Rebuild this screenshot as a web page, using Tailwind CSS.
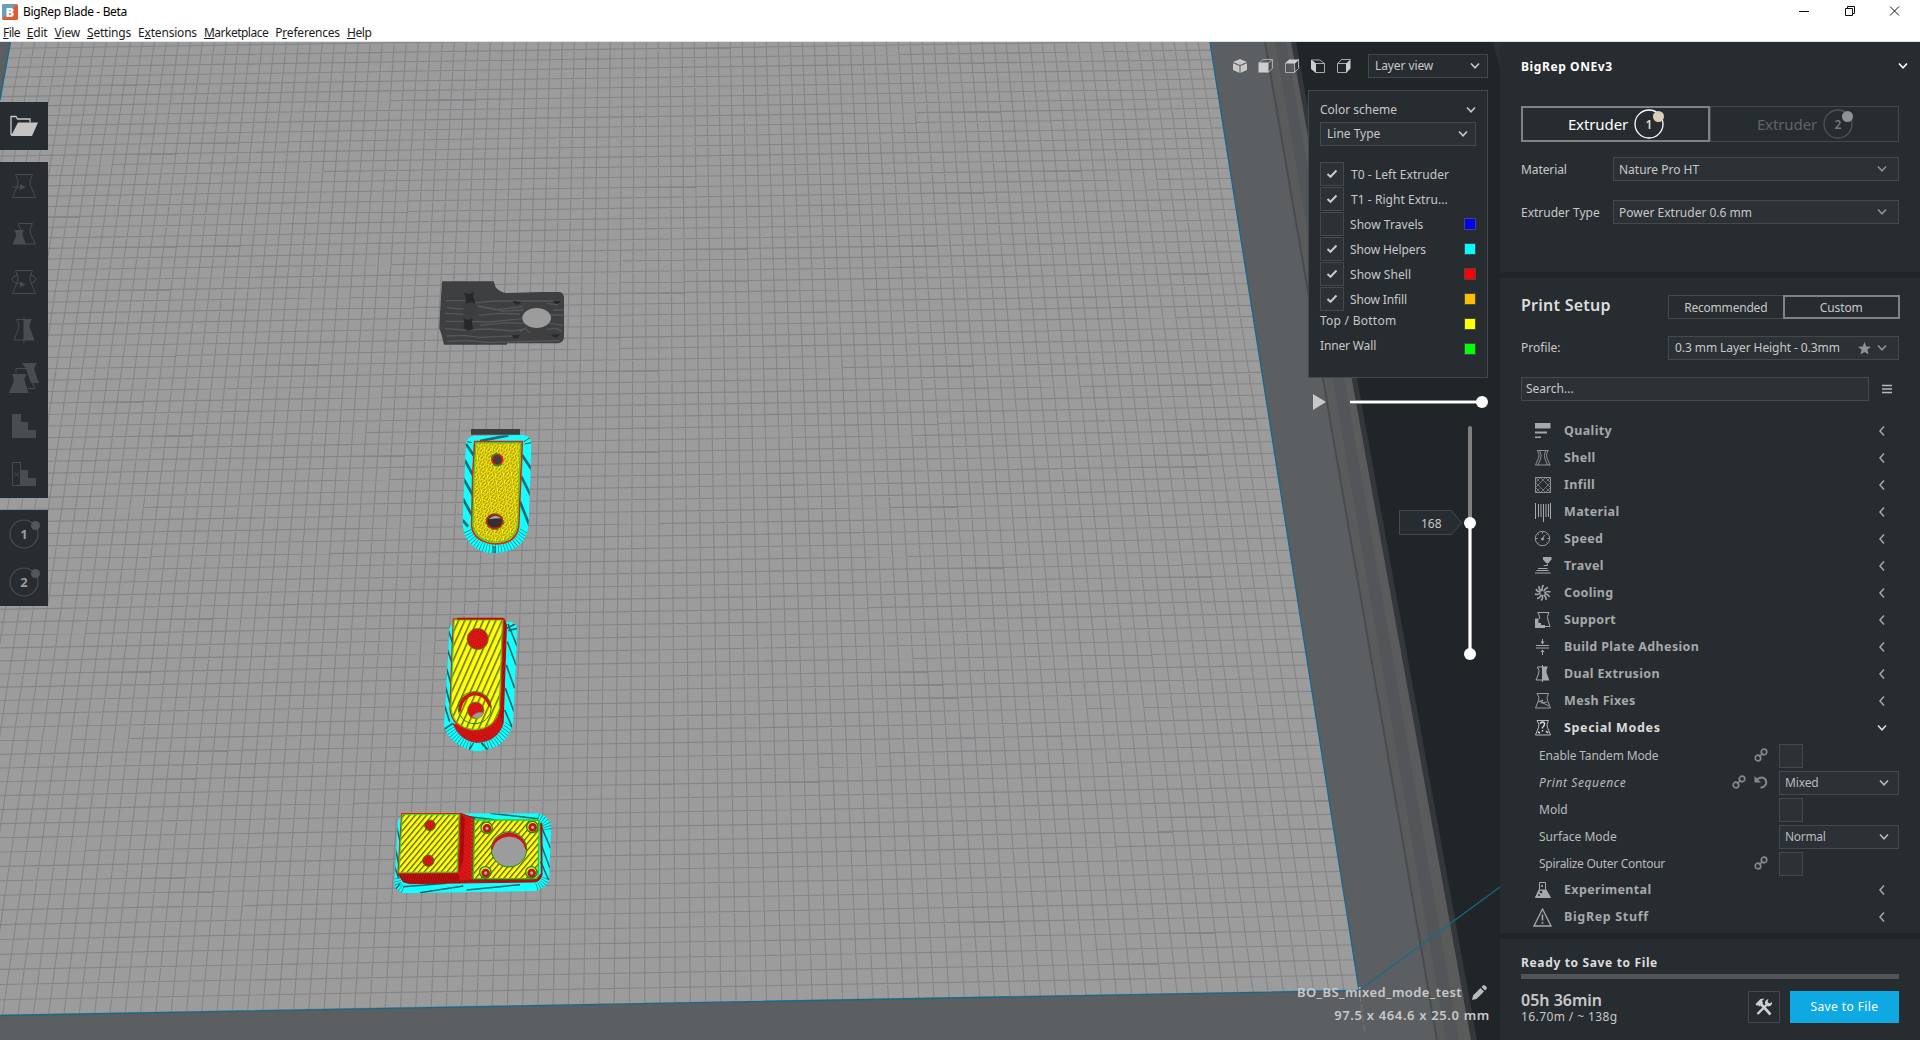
<!DOCTYPE html>
<html lang="en">
<head>
<meta charset="utf-8">
<title>BigRep Blade - Beta</title>
<script src="https://cdn.jsdelivr.net/npm/@tailwindcss/browser@4"></script>
</head>
<body class="flex h-[1040px] w-[1920px] flex-col overflow-hidden bg-white font-['Noto_Sans',sans-serif] text-[12px] leading-none text-[#c8c8c8]">
<svg class="hidden">
  <symbol id="down" viewBox="0 0 10 8"><path d="M1 1.500 5 5.800 9 1.500" fill="none" stroke="currentColor" stroke-width="1.600"/></symbol>
  <symbol id="left" viewBox="0 0 8 12"><path d="M6 1.500 2 6l4 4.500" fill="none" stroke="currentColor" stroke-width="1.500"/></symbol>
  <symbol id="check" viewBox="0 0 12 10"><path d="M1.500 5 4.500 7.800 10.500 1.500" fill="none" stroke="currentColor" stroke-width="2"/></symbol>
  <symbol id="link" viewBox="0 0 14 14"><g fill="none" stroke="currentColor" stroke-width="1.700"><circle cx="4" cy="10" r="2.800"/><circle cx="10" cy="4" r="2.800"/><path d="M5 9 9 5"/></g></symbol>
</svg>

<header class="flex h-[42px] flex-none flex-col border-b border-[#dde2e4] text-black">
  <div class="flex h-[24px] items-center">
    <svg class="ml-[2px] h-[16px] w-[16px]" viewBox="0 0 16 16"><rect width="16" height="16" rx="1.500" fill="#e05a35"/><path d="M0 1.500Q0 0 1.500 0H14.500L0 15Z" fill="#67a3b4"/><text x="8" y="12.800" text-anchor="middle" font-family="Noto Sans" font-weight="900" font-size="13" fill="#fff">B</text></svg>
    <span class="ml-[5px] text-[12px] tracking-[-0.35px]">BigRep Blade - Beta</span>
    <div class="ml-auto flex items-center">
      <svg class="h-[12px] w-[110px]" viewBox="0 0 110 12" fill="none" stroke="#111" stroke-width="1"><path d="M6 5.500h10M52.500 2.500h7v7h-7zM54.500 2.500v-2h7v7h-2M97 .5l9 9M106 .5l-9 9"/></svg>
      <span class="w-[17px]"></span>
    </div>
  </div>
  <nav class="flex h-[17px] items-center gap-[7px] pl-[3px] text-[12px] tracking-[-0.2px] text-[#1c1c1c]">
    <span class="tracking-[-0.6px]"><u>F</u>ile</span><span><u>E</u>dit</span><span><u>V</u>iew</span><span><u>S</u>ettings</span><span>E<u>x</u>tensions</span><span class="tracking-[-0.5px]"><u>M</u>arketplace</span><span>P<u>r</u>eferences</span><span class="tracking-[-0.4px]"><u>H</u>elp</span>
  </nav>
</header>

<div class="flex flex-1">
<main class="relative h-[998px] w-[1500px] flex-none overflow-hidden bg-[#202528]">
  <svg class="absolute inset-0 h-[998px] w-[1500px]" viewBox="0 42 1500 998">
    <defs>
      <clipPath id="plate"><path d="M10.500 42H1210L1359 990.500 0 1015.500V100Z"/></clipPath>
      <clipPath id="brimA"><path d="M280 528 430 525Q453 530 453 545V600L446 790Q443 835 415 858 385 878 345 880 300 880 272 852 246 825 248 780L258 545Q264 532 280 528Z"/></clipPath>
      <clipPath id="brimB"><path d="M208 85 220 66H395L411 78V110L399 370Q390 410 355 436 320 454 285 453 240 446 205 408L192 380Z"/></clipPath>
      <clipPath id="brimC"><path d="M54 660 66 648 240 640H478Q508 652 513 678L508 838Q502 862 466 873L70 880Q48 874 43 855Z"/></clipPath>
      <pattern id="hatch" width="17" height="17" patternUnits="userSpaceOnUse" patternTransform="rotate(24)"><rect width="17" height="17" fill="#ffff12"/><rect width="4.500" height="17" fill="#6c6a00"/></pattern>
      <pattern id="hatch2" width="13" height="13" patternUnits="userSpaceOnUse" patternTransform="rotate(40)"><rect width="13" height="13" fill="#ffff12"/><rect width="4" height="13" fill="#5f5d00"/></pattern>
      <pattern id="speck" width="24" height="21" patternUnits="userSpaceOnUse" patternTransform="rotate(-7)"><rect width="24" height="21" fill="#fff714"/><path d="M1 5h3V2h3M9 9h3V6h3M17 4h3V1h3M3 15h3v-3h3M12 19h3v-3h3M19 12h3v-3M8 2h3M2 20h3M21 18h3" fill="none" stroke="#5b4a00" stroke-width="2.200"/><path d="M5 9h4M14 13h5M18 7h4M9 17h3" stroke="#c48a00" stroke-width="3"/></pattern>
      <pattern id="redsp" width="9" height="9" patternUnits="userSpaceOnUse" patternTransform="rotate(35)"><rect width="9" height="9" fill="#f01818"/><path d="M0 2h5M4 7h5" stroke="#9a0c0c" stroke-width="2.500"/></pattern>
      <pattern id="redd" width="7" height="7" patternUnits="userSpaceOnUse" patternTransform="rotate(15)"><rect width="7" height="7" fill="#c80f0f"/><rect width="3" height="7" fill="#8f0b0b"/></pattern>
    </defs>
    <path d="M0 42H1292L1473 1040H0Z" fill="#5b5f61"/>
    <path d="M1265 42h27l181 998h-36Z" fill="#5a5c5c"/>
    <path d="M1275 42h11l173 998h-13Z" fill="#525658"/>
    <path d="M1265 42 1437 1040" stroke="#484c4e" stroke-width="2"/>
    <path d="M1291 42h5l181 998h-6Z" fill="#33373a"/>
    <path d="M1493 42h7v26Z" fill="#2b3033"/>
    <g clip-path="url(#plate)">
      <rect y="42" width="1400" height="998" fill="#9c9c9c"/>
      <g id="grid" stroke="#848589" stroke-width="1.100"></g>
    </g>
    <path d="M10.500 42 0 100M1210 42 1359 990.500 0 1015.500M1359 990.500 1500 887" fill="none" stroke="#17698c" stroke-width="1.300"/>
    <path d="M1360 995 1365 1035" stroke="#74787a" stroke-dasharray="7 3"/>

    <g transform="translate(380 260) scale(.33333)">
      <path d="M186 64H341L347 82Q358 96 378 99L484 96H538Q550 98 552 110V232Q550 247 535 250H382L380 254H192L184 222 178 205 179 180 183 110Z" fill="#3d3f41"/>
      <path d="M198 122H250L290 128 350 123H545M200 143 240 147 300 140 345 149 430 140M290 136 370 153 430 150M196 160 250 163M298 166 350 160 420 162M198 184H246L330 186 425 176M510 165H550M300 196 380 188 432 190M196 206 250 210 330 207 400 213 430 208M510 190 550 196M200 228 250 226 300 232 400 228M420 215 435 205 450 218M500 208 530 205 545 215M200 244 260 242 330 247 540 242M500 130 535 135M520 150 550 150" fill="none" stroke="#55575a" stroke-width="4"/>
      <ellipse cx="470" cy="174" rx="43" ry="30" fill="#9c9c9c"/>
      <path d="M252 98 268 102 282 96 280 110 286 130 268 128 256 132 258 114ZM250 175 264 180 278 174 276 190 280 208 264 212 250 205 254 190ZM398 122q12 22 26 4zM518 122q12 18 26 0zM394 226q14 20 26 0zM514 224q14 18 26-2z" fill="#26282a"/>
      <circle cx="272" cy="149" r="22" fill="#3b3d3f"/>
      <path d="M273 507H420V524H273Z" fill="#3c3d3f"/>
      <g clip-path="url(#brimA)">
        <path d="M240 520H460V885H240Z" fill="#14ffff"/>
        <path d="M258 552 284 590M254 600 284 655M250 655 280 708M248 715 278 770M426 585 456 630M424 650 454 710M420 725 450 800M300 543 385 526M248 780 264 800" stroke="#0d6d70" stroke-width="8"/>
        <path d="M432 545 452 532M434 552 454 548M262 545 276 548" stroke="#0b5356" stroke-width="3"/>
        <path d="M343 858V880" stroke="#0b5356" stroke-width="10" opacity=".6"/>
        <path d="M258 815Q282 866 343 868T438 810" fill="none" stroke="#067478" stroke-width="36" stroke-dasharray="2 7" opacity=".85"/>
      </g>
      <path d="M284 545H427L423 640 416 800Q408 852 345 852 283 846 275 800L278 650Z" fill="url(#speck)" stroke="#f01818" stroke-width="5"/>
      <path d="M288 549H422L418 640 413 796Q402 846 345 846 287 841 279 796L282 650Z" fill="none" stroke="#1ee51e" stroke-width="3.500"/>
      <circle cx="352" cy="599" r="16" fill="#403c40" stroke="#f01818" stroke-width="5"/><path d="M334 594q4-14 20-12M340 614q12 6 26-2" fill="none" stroke="#0d9d22" stroke-width="4"/>
      <ellipse cx="344" cy="784" rx="24" ry="21" fill="#303033" stroke="#d11" stroke-width="5"/><path d="M326 778Q344 758 364 775Q344 775 326 778Z" fill="#aaa"/><ellipse cx="344" cy="785" rx="27" ry="24" fill="none" stroke="#12a020" stroke-width="3" stroke-dasharray="9 5"/>
    </g>

    <g transform="translate(380 600) scale(.33333)">
      <g clip-path="url(#brimB)">
        <path d="M180 55H420V460H180Z" fill="#14ffff"/>
        <path d="M204 88 220 135M201 145 218 195M198 200 214 255M195 255 210 310M193 315 209 365M384 72 412 140M382 125 408 195M379 195 404 265M376 265 402 335M374 330 398 385M193 388 218 370M380 85 410 70M385 92 412 85" stroke="#0d6568" stroke-width="5"/>
        <path d="M203 380Q232 436 290 440T392 374" fill="none" stroke="#067478" stroke-width="34" stroke-dasharray="2 7" opacity=".85"/>
        <path d="M264 455 280 430M324 450 304 428" stroke="#0b5356" stroke-width="5"/>
        <path d="M282 430H302L314 454H270Z" fill="#14ffff"/>
      </g>
      <path d="M365 56H374L381 75 371 370Q350 428 290 428 240 424 218 370L280 390 340 370Z" fill="url(#redd)"/>
      <path d="M218 370Q240 424 290 428 348 426 369 375L359 345Q335 392 280 392Z" fill="url(#redsp)" opacity=".75"/>
      <path d="M220 57H370L361 325Q352 388 280 392 214 382 210 325L215 180Z" fill="url(#hatch)" stroke="#f01818" stroke-width="4"/>
      <path d="M223 60H367L358 325Q348 386 280 389 218 380 213 325L218 180Z" fill="none" stroke="#1ee51e" stroke-width="3"/>
      <path d="M232 56H370" stroke="#c00" stroke-width="5"/>
      <circle cx="293" cy="117" r="32" fill="url(#redsp)" stroke="#1db41d" stroke-width="2"/>
      <path d="M236 335Q232 285 284 275 330 280 334 325L325 318Q316 288 284 286 250 292 242 335Z" fill="#d11414"/>
      <ellipse cx="284" cy="323" rx="50" ry="48" fill="none" stroke="#128c1c" stroke-width="3"/>
      <circle cx="287" cy="331" r="25" fill="url(#redsp)" stroke="#1db41d" stroke-width="2"/>
      <path d="M276 350Q290 332 310 338 306 354 290 356Z" fill="#9c9c9c"/>

      <g clip-path="url(#brimC)">
        <path d="M30 630H520V885H30Z" fill="#14ffff"/>
        <path d="M50 680 64 740M46 745 60 810M44 800 56 835M484 680 512 745M484 735 510 805M482 785 506 840M330 640 475 656M250 648 350 660M260 870 420 854M120 878 250 858M60 850 40 878M70 860 200 850" stroke="#0d6568" stroke-width="4.500"/>
        <path d="M474 652Q502 662 504 692M500 835Q492 857 468 864M48 835Q50 862 70 870" fill="none" stroke="#067478" stroke-width="28" stroke-dasharray="2 6" opacity=".85"/>
      </g>
      <path d="M54 822 236 818 242 640 284 655 282 836 470 838 484 820 482 670 486 672V825Q480 844 465 846L90 851 70 846Z" fill="url(#redd)" stroke="#b01010" stroke-width="3"/>
      <path d="M242 642 284 656 280 836 240 842 234 818Z" fill="url(#redsp)"/>
      <path d="M242 642V700L236 820 250 780 254 655Z" fill="#a50d0d"/>
      <path d="M65 641H240L234 818 54 820Z" fill="url(#hatch2)" stroke="#f01818" stroke-width="4"/>
      <path d="M67 644H237L231 816 57 817Z" fill="none" stroke="#1ee51e" stroke-width="3"/>
      <path d="M284 660H470Q478 662 478 670L474 828Q470 836 462 836H280Z" fill="url(#hatch2)" stroke="#1ed51e" stroke-width="4"/>
      <path d="M276 656V836" stroke="#18c018" stroke-width="2" stroke-dasharray="6 5"/>
      <circle cx="150" cy="676" r="16" fill="url(#redsp)" stroke="#1b8f1b" stroke-width="3"/>
      <circle cx="145" cy="782" r="17" fill="url(#redsp)" stroke="#1b8f1b" stroke-width="3"/>
      <circle cx="387" cy="748" r="53" fill="#9c9c9c" stroke="#128c1c" stroke-width="3"/>
      <path d="M336 748Q338 706 387 698 436 706 438 748 428 710 387 708 346 712 336 748Z" fill="#d11414" stroke="#c11" stroke-width="3"/>
      <g fill="#ffe81a" stroke="#138a1d" stroke-width="4"><circle cx="320" cy="683" r="17"/><circle cx="457" cy="681" r="17"/><circle cx="316" cy="817" r="17"/><circle cx="454" cy="817" r="17"/></g>
      <g fill="#aaa" stroke="#c01515" stroke-width="8"><circle cx="321" cy="685" r="9"/><circle cx="458" cy="682" r="9"/><circle cx="317" cy="819" r="9"/><circle cx="455" cy="819" r="9"/></g>
    </g>
  </svg>

  <div class="absolute left-0 top-[60px] flex w-[48px] flex-col gap-3">
    <div class="h-[48px] bg-[#272c30]"><svg viewBox="0 0 48 48" class="h-[48px] w-[48px]"><path d="M11 33V14.500h5l1.500 2.500H30v3.500M11 33l1-1" fill="none" stroke="#c8c8c8" stroke-width="1.300"/><path d="M18 20.500H38L32 34H11Z" fill="#c4c4c4"/></svg></div>
    <div class="flex flex-col bg-[#272c30] text-[#494d50]">
      <svg viewBox="0 0 48 48" class="h-[48px]" fill="none" stroke="currentColor"><path d="M15.500 12.500h17q-4 6.500-2 11l5 12h-23l5-12q2-4.500-2-11z"/><path d="M12 25h9"/><path d="M20 22l5.500 3-5.500 3z" fill="currentColor" stroke="none"/></svg>
      <svg viewBox="0 0 48 48" class="h-[48px]"><path d="M18.500 13.500h14q-4 6-2 10l5 10.500H25" fill="none" stroke="currentColor"/><path d="M18 13.500l3 7" stroke="currentColor"/><path d="M14 20h10q-2.500 3.500-1 6l3 8.500H12.500L16 26q.8-2.500-2-6z" fill="currentColor"/></svg>
      <svg viewBox="0 0 48 48" class="h-[48px]" fill="none" stroke="currentColor"><path d="M15.500 12.500h17q-4 6.500-2 11l5 12h-23l5-12q2-4.500-2-11zM18 17q-6 1-6 4 0 4 9 5M30 17q6 1 6 4 0 3-5 4"/><path d="M20 23.500l5.500 3-5.500 3z" fill="currentColor" stroke="none"/></svg>
      <svg viewBox="0 0 48 48" class="h-[48px]"><path d="M24 13.500h-7.500q4 6 1.500 10l-4 10.500h10M24 11v26" fill="none" stroke="currentColor"/><path d="M24 13h8q-4 6-1.500 10.500l4 11H24z" fill="currentColor"/></svg>
      <svg viewBox="0 0 48 48" class="h-[48px]"><path d="M22 9h15q-4 5-2 9l4 11h-8l-5-14zM12 20h15q-4 5-2 8l3.500 11H9l4.500-11q1-4-1.500-8z" fill="currentColor"/><path d="M16 19v-4.500h15q-3 5-1 9l5 11h-7" fill="none" stroke="currentColor"/></svg>
      <svg viewBox="0 0 48 48" class="h-[48px]"><path d="M12 12h9v8h7v8h8v8H12z" fill="currentColor"/></svg>
      <svg viewBox="0 0 48 48" class="h-[48px]"><path d="M20.500 20H28v8h8v8H20.500z" fill="currentColor"/><path d="M12.500 12.500h8v23h-8zM14.500 22.500l4 4M18.500 22.500l-4 4" fill="none" stroke="currentColor"/></svg>
    </div>
    <div class="flex flex-col bg-[#272c30] font-bold">
      <svg viewBox="0 0 48 48" class="h-[48px]"><circle cx="24" cy="24" r="14" fill="none" stroke="#4b4f51" stroke-width="1.200"/><circle cx="35.500" cy="15.500" r="4.500" fill="#55585a"/><text x="24" y="28.500" text-anchor="middle" font-size="13" fill="#9a9c9d">1</text></svg>
      <svg viewBox="0 0 48 48" class="h-[48px]"><circle cx="24" cy="24" r="14" fill="none" stroke="#4b4f51" stroke-width="1.200"/><circle cx="35.500" cy="15.500" r="4.500" fill="#55585a"/><text x="24" y="28.500" text-anchor="middle" font-size="13" fill="#9a9c9d">2</text></svg>
    </div>
  </div>

  <div class="absolute right-[12px] top-[12px] flex w-[256px] items-center justify-between">
    <svg class="h-[16px] w-[120px]" viewBox="0 0 120 16" stroke-linejoin="round">
      <path d="M1 4 8 1 15 4 8 7ZM1 5.200 7.500 8V15L1 12ZM15 5.200 8.500 8V15L15 12Z" fill="#c8c8c8"/>
      <g fill="none" stroke="#a8aaab"><path d="M27 5l4-3.500h9.500v9L36 14.500M36 5l4.500-3.500M53.500 5v9.500h9V5l4-3.500v9l-4 4M79.500 2.500l4 3h9v9h-9M79.500 2h8.500l4.500 3.500M105.500 5.500h9v9h-9zl4-4h9"/></g>
      <g fill="#cdcdcd"><path d="M26.500 4.500h10v10h-10zM53 5.500l4-4h10l-4 4zM79 1.500l5 4v9.500l-5-4zM114 5.500l4.500-4v9l-4.500 4.500z"/></g>
    </svg>
    <div class="flex h-[24px] w-[120px] items-center justify-between border border-[#44494c] bg-[#272c30] pl-[6px] pr-[7px]"><span class="tracking-[-0.1px]">Layer view</span><svg class="h-[8px] w-[10px]"><use href="#down"/></svg></div>
  </div>

  <section class="absolute right-[12px] top-[48px] flex h-[288px] w-[180px] flex-col border border-[#44494c] bg-[#272c30] px-[11px]">
    <div class="mt-[11px] flex h-[16px] items-center justify-between"><span>Color scheme</span><svg class="h-[8px] w-[10px]"><use href="#down"/></svg></div>
    <div class="mt-[4px] flex h-[24px] items-center justify-between border border-[#44494c] bg-[#2c3135] pl-[6px] pr-[7px]"><span>Line Type</span><svg class="h-[8px] w-[10px]"><use href="#down"/></svg></div>
    <div class="mt-[16px] flex flex-col gap-px tracking-[0.05px]">
      <div class="flex h-[24px] items-center"><i class="flex h-[24px] w-[24px] items-center justify-center border border-[#44494c] bg-[#2c3135]"><svg class="h-[10px] w-[12px]"><use href="#check"/></svg></i><span class="ml-[7px] pt-px">T0 - Left Extruder</span></div>
      <div class="flex h-[24px] items-center"><i class="flex h-[24px] w-[24px] items-center justify-center border border-[#44494c] bg-[#2c3135]"><svg class="h-[10px] w-[12px]"><use href="#check"/></svg></i><span class="ml-[7px] pt-px">T1 - Right Extru...</span></div>
      <div class="flex h-[24px] items-center"><i class="h-[24px] w-[24px] border border-[#44494c] bg-[#2c3135]"></i><span class="ml-[6px] pt-px">Show Travels</span><b class="ml-auto h-[12px] w-[12px] border border-[#44494c] bg-[#0000ff]"></b></div>
      <div class="flex h-[24px] items-center"><i class="flex h-[24px] w-[24px] items-center justify-center border border-[#44494c] bg-[#2c3135]"><svg class="h-[10px] w-[12px]"><use href="#check"/></svg></i><span class="ml-[6px] pt-px tracking-[-0.1px]">Show Helpers</span><b class="ml-auto h-[12px] w-[12px] border border-[#44494c] bg-[#00ffff]"></b></div>
      <div class="flex h-[24px] items-center"><i class="flex h-[24px] w-[24px] items-center justify-center border border-[#44494c] bg-[#2c3135]"><svg class="h-[10px] w-[12px]"><use href="#check"/></svg></i><span class="ml-[6px] pt-px">Show Shell</span><b class="ml-auto h-[12px] w-[12px] border border-[#44494c] bg-[#ff0000]"></b></div>
      <div class="flex h-[24px] items-center"><i class="flex h-[24px] w-[24px] items-center justify-center border border-[#44494c] bg-[#2c3135]"><svg class="h-[10px] w-[12px]"><use href="#check"/></svg></i><span class="ml-[6px] pt-px tracking-[-0.15px]">Show Infill</span><b class="ml-auto h-[12px] w-[12px] border border-[#44494c] bg-[#ffbf00]"></b></div>
      <div class="flex h-[24px] items-center"><span class="mb-[6px] tracking-[0.25px]">Top / Bottom</span><b class="ml-auto h-[12px] w-[12px] border border-[#44494c] bg-[#ffff00]"></b></div>
      <div class="flex h-[24px] items-center"><span class="mb-[6px] tracking-[-0.15px]">Inner Wall</span><b class="ml-auto h-[12px] w-[12px] border border-[#44494c] bg-[#00ff00]"></b></div>
    </div>
  </section>

  <svg class="absolute left-[1300px] top-[340px] h-[290px] w-[200px]" viewBox="1300 382 200 290">
    <path d="M1313 394v16l13-8z" fill="#c8c8c8"/>
    <path d="M1350 402H1482" stroke="#8a8a8a" stroke-width="4"/><path d="M1350 402H1482" stroke="#fff" stroke-width="2"/><circle cx="1482" cy="402" r="6" fill="#fff"/>
    <path d="M1470 428V523" stroke="#808080" stroke-width="4" stroke-linecap="round"/><path d="M1470 523V654" stroke="#8a8a8a" stroke-width="4"/><path d="M1470 523V654" stroke="#fff" stroke-width="2.500"/><circle cx="1470" cy="523" r="6" fill="#fff"/><circle cx="1470" cy="654" r="6" fill="#fff"/>
    <path d="M1399.500 510.500H1451.500L1461.500 523 1451.500 534.500H1399.500Z" fill="#272c30" stroke="#44494c"/>
    <text x="1421" y="528" font-size="12" fill="#c8c8c8">168</text>
  </svg>

  <div class="absolute bottom-[18px] right-[11px] flex flex-col items-end gap-[10px] font-semibold">
    <div class="flex h-[14px] items-center text-[13px] tracking-[0.42px]"><span>BO_BS_mixed_mode_test</span><svg class="ml-[10px] mr-[2px] h-[15px] w-[15px]" viewBox="0 0 15 15" fill="#b9bbbc"><path d="M0 15 1 10.500 8.500 3 12 6.500 4.500 14ZM9.500 2 11 .5q1-.8 2 0l1.500 1.500q.8 1 0 2L13 5.500Z"/></svg></div>
    <div class="-mr-px text-[13px] tracking-[0.65px]">97.5 x 464.6 x 25.0 mm</div>
  </div>
</main>

<aside class="flex w-[420px] flex-col bg-[#202528]">
  <section class="h-[230px] bg-[#272c30] pl-[21px] pr-[21px]">
    <div class="-mr-[10px] flex h-[48px] items-center justify-between font-bold text-white"><span class="pt-px tracking-[0.6px]">BigRep ONEv3</span><svg class="mr-px h-[8px] w-[10px]"><use href="#down"/></svg></div>
    <div class="mt-[16px] flex h-[36px] text-[15px]">
      <div class="flex w-[189px] items-center justify-center gap-[6px] border-2 border-[#808385] text-white"><span class="pl-[3px] tracking-[-0.1px]">Extruder</span><svg class="h-[32px] w-[32px]" viewBox="0 0 32 32"><circle cx="15" cy="16" r="14" fill="none" stroke="#fff" stroke-width="1.300"/><circle cx="24.500" cy="8.500" r="5.500" fill="#dccfb8"/><text x="15" y="20.500" font-size="12" font-weight="600" text-anchor="middle" fill="#ddd">1</text></svg></div>
      <div class="flex w-[189px] items-center justify-center gap-[6px] border border-[#44494c] text-[#606466]"><span class="pl-[3px] tracking-[-0.1px]">Extruder</span><svg class="h-[32px] w-[32px]" viewBox="0 0 32 32"><circle cx="15" cy="16" r="14" fill="none" stroke="#505456" stroke-width="1.300"/><circle cx="24.500" cy="8.500" r="5.500" fill="#909293"/><text x="15" y="20.500" font-size="12" font-weight="600" text-anchor="middle" fill="#77797b">2</text></svg></div>
    </div>
    <div class="mt-[15px] flex h-[24px] items-center"><span class="w-[92px] pt-px tracking-[-0.1px]">Material</span><div class="flex h-[24px] flex-1 items-center justify-between border border-[#44494c] bg-[#2c3135] pl-[5px] pr-[11px]"><span class="pt-px">Nature Pro HT</span><svg class="h-[8px] w-[10px] text-[#8f9192]"><use href="#down"/></svg></div></div>
    <div class="mt-[19px] flex h-[24px] items-center"><span class="w-[92px] pt-px">Extruder Type</span><div class="flex h-[24px] flex-1 items-center justify-between border border-[#44494c] bg-[#2c3135] pl-[5px] pr-[11px]"><span class="pt-px">Power Extruder 0.6 mm</span><svg class="h-[8px] w-[10px] text-[#8f9192]"><use href="#down"/></svg></div></div>
  </section>

  <section class="mt-[6px] h-[655px] bg-[#272c30] pl-[21px] pr-[21px] pt-[17px]">
    <div class="-mr-px flex h-[24px] items-center justify-between"><h2 class="pb-[5px] text-[16px] font-semibold tracking-[0.25px] text-[#dcdcdc]">Print Setup</h2>
      <div class="flex h-[24px] w-[232px]"><span class="flex flex-1 items-center justify-center border border-r-0 border-[#44494c] pt-px tracking-[-0.2px]">Recommended</span><span class="flex flex-1 items-center justify-center border-2 border-[#808385] pt-px tracking-[-0.1px]">Custom</span></div></div>
    <div class="mt-[17px] flex h-[24px] items-center justify-between"><span>Profile:</span><div class="flex h-[24px] w-[231px] items-center border border-[#44494c] bg-[#2c3135] pl-[6px] pr-[11px]"><span class="tracking-[-0.08px]">0.3 mm Layer Height - 0.3mm</span><svg class="ml-auto h-[13px] w-[13px]" viewBox="0 0 13 13"><path d="M6.500 0 8.300 4.500 13 4.800 9.400 7.800 10.600 12.500 6.500 10 2.400 12.500 3.600 7.800 0 4.800 4.700 4.500Z" fill="#8f9192"/></svg><svg class="ml-[6px] h-[8px] w-[10px] text-[#8f9192]"><use href="#down"/></svg></div></div>
    <div class="mt-[17px] flex h-[24px] items-center"><div class="flex h-[24px] w-[348px] items-center border border-[#44494c] bg-[#2c3135] pl-[4px]">Search...</div><svg class="ml-[13px] h-[10px] w-[10px]" viewBox="0 0 10 10"><path d="M0 1.500h10M0 5h10M0 8.500h10" stroke="#b8babb" stroke-width="1.400"/></svg></div>

    <div id="settings" class="mt-[17px] flex flex-col text-[12.5px] font-bold tracking-[0.35px] text-[#a6a8a9]">
      <div class="flex h-[27px] items-center pl-[12px] pr-[13px]"><svg class="h-[19px] w-[19px]" viewBox="0 0 19 19"><path d="M2 1h15.500v5.500H2zM2 9.500h12v2H2zM2 14.500h6v1.500H2z" fill="currentColor"/></svg><span class="ml-[12px]">Quality</span><svg class="mb-px ml-auto h-[12px] w-[8px]"><use href="#left"/></svg></div>
      <div class="flex h-[27px] items-center pl-[12px] pr-[13px]"><svg class="h-[19px] w-[19px]" viewBox="0 0 19 19" fill="none" stroke="currentColor" stroke-width=".8"><path d="M4 1.500h11.500M2.500 16h15M4.500 1.500Q7 6 5.500 9L2.500 16M15 1.500Q12.500 6 14 9l3 7M7 2q2 5 .5 8L5 16M12.500 2q-2 5-.5 8l2.500 6"/></svg><span class="ml-[12px]">Shell</span><svg class="mb-px ml-auto h-[12px] w-[8px]"><use href="#left"/></svg></div>
      <div class="flex h-[27px] items-center pl-[12px] pr-[13px]"><svg class="h-[19px] w-[19px]" viewBox="0 0 19 19" fill="none" stroke="currentColor" stroke-width=".8"><path d="M2.500 1.500h15v15h-15z"/><path d="M2.500 6.500l5-5 10 10-5 5-10-10M12.500 1.500l5 5-10 10-5-5zM2.500 1.500l4 4M17.500 1.500l-4 4M2.500 16.500l4-4M17.500 16.500l-4-4" stroke-width=".6"/></svg><span class="ml-[12px]">Infill</span><svg class="mb-px ml-auto h-[12px] w-[8px]"><use href="#left"/></svg></div>
      <div class="flex h-[27px] items-center pl-[12px] pr-[13px]"><svg class="h-[19px] w-[19px]" viewBox="0 0 19 19" fill="none" stroke="currentColor"><path d="M2.500 0v16M5.500 1v13M8 1v13M10.500 1v18M13 1v13M15.500 1v13M17.500 0v16" stroke-width="1"/></svg><span class="ml-[12px]">Material</span><svg class="mb-px ml-auto h-[12px] w-[8px]"><use href="#left"/></svg></div>
      <div class="flex h-[27px] items-center pl-[12px] pr-[13px]"><svg class="h-[19px] w-[19px]" viewBox="0 0 19 19" fill="none" stroke="currentColor" stroke-width=".9"><circle cx="9.500" cy="8.500" r="7.200"/><path d="M9.500 9l2-4M9.500 1.500v2M2.500 8.500h2M14.500 8.500h2M4.500 3.500l1.300 1.300M14.500 3.500l-1 1M4.500 13.500l1-1M14.500 13.500l-1-1"/><circle cx="9.500" cy="9" r="1" fill="currentColor"/></svg><span class="ml-[12px]">Speed</span><svg class="mb-px ml-auto h-[12px] w-[8px]"><use href="#left"/></svg></div>
      <div class="flex h-[27px] items-center pl-[12px] pr-[13px]"><svg class="h-[19px] w-[19px]" viewBox="0 0 19 19"><path d="M10 0h8.500v2.500L15.500 6h-2.500L10 2.500z" fill="currentColor"/><path d="M10.500 8.500h4V6.500M5 11.500h9.500M3.500 13.500h12M2 16h15.500" fill="none" stroke="currentColor"/></svg><span class="ml-[12px]">Travel</span><svg class="mb-px ml-auto h-[12px] w-[8px]"><use href="#left"/></svg></div>
      <div class="flex h-[27px] items-center pl-[12px] pr-[13px]"><svg class="h-[19px] w-[19px]" viewBox="0 0 19 19" fill="none" stroke="currentColor" stroke-width="1.500"><path d="M9.500 7Q8 4 10.500 1M11 7.500Q11.500 4.500 15 3.500M11.500 9Q14 6.500 17.500 8M11.500 10Q15 9.500 16.500 13M10.500 11Q13.500 12.500 13 16M9 11Q10.500 14 8 16.500M8 10.500Q7.500 14 4 14.500M7.500 9Q5 11.500 2 10M7.500 8Q4 8 3 5M8.500 7Q5.500 5.500 6 2"/></svg><span class="ml-[12px]">Cooling</span><svg class="mb-px ml-auto h-[12px] w-[8px]"><use href="#left"/></svg></div>
      <div class="flex h-[27px] items-center pl-[12px] pr-[13px]"><svg class="h-[19px] w-[19px]" viewBox="0 0 19 19"><path d="M2 7.500h3.500V12H8v2h4v3H2z" fill="currentColor"/><path d="M4.500 1.500h11.500q-2.500 4-1 7.500l2 6.500h-5M5 2q2 3 1.500 6" fill="none" stroke="currentColor"/></svg><span class="ml-[12px]">Support</span><svg class="mb-px ml-auto h-[12px] w-[8px]"><use href="#left"/></svg></div>
      <div class="flex h-[27px] items-center pl-[12px] pr-[13px]"><svg class="h-[19px] w-[19px]" viewBox="0 0 19 19"><path d="M9.500 1v4M9.500 12v5M3 7.500h13M3 10h13" stroke="currentColor"/><path d="M7.500 3.500h4L9.500 6.500zM7.500 14h4L9.500 11.500z" fill="currentColor"/></svg><span class="ml-[12px]">Build Plate Adhesion</span><svg class="mb-px ml-auto h-[12px] w-[8px]"><use href="#left"/></svg></div>
      <div class="flex h-[27px] items-center pl-[12px] pr-[13px]"><svg class="h-[19px] w-[19px]" viewBox="0 0 19 19"><path d="M9.500 0v17M9.500 2H4.500q2.500 4 1 7L3 15h6.500" fill="none" stroke="currentColor"/><path d="M9.500 1.500h5.500q-2.500 4-1 7.500l2.500 6.500h-7z" fill="currentColor"/></svg><span class="ml-[12px]">Dual Extrusion</span><svg class="mb-px ml-auto h-[12px] w-[8px]"><use href="#left"/></svg></div>
      <div class="flex h-[27px] items-center pl-[12px] pr-[13px]"><svg class="h-[19px] w-[19px]" viewBox="0 0 19 19" fill="none" stroke="currentColor" stroke-width=".9"><path d="M4 1.500h11.500q-2.500 4-1 7l3 7.500h-15l3-7.500q1.500-3-1.500-7zM5 10l5-2-2 3 6-1M6 9l10 5"/></svg><span class="ml-[12px]">Mesh Fixes</span><svg class="mb-px ml-auto h-[12px] w-[8px]"><use href="#left"/></svg></div>
      <div class="flex h-[27px] items-center pl-[12px] pr-[12px] text-[#dcdcdc]"><svg class="h-[19px] w-[19px]" viewBox="0 0 19 19" fill="none" stroke="currentColor"><path d="M4 1.500h11.500q-2.500 4-1 7l3 7.500h-15l3-7.500q1.500-3-1.500-7z" stroke-width=".8"/><path d="M7.500 5q0-2 2-2t2 2-2 3.500v1M9.500 11v1.500M13 12l2 2M5 13l2 1" stroke-width="1.400"/></svg><span class="ml-[12px] tracking-[0.65px]">Special Modes</span><svg class="mb-px ml-auto h-[8px] w-[10px]"><use href="#down"/></svg></div>

      <div class="flex flex-col text-[12px] font-normal tracking-normal text-[#b9bbbc]">
        <div class="flex h-[27px] items-center pl-[18px]"><span class="flex-1 tracking-[-0.13px]">Enable Tandem Mode</span><svg class="mb-px mr-[11px] h-[14px] w-[14px] text-[#85888a]"><use href="#link"/></svg><div class="w-[120px]"><div class="h-[24px] w-[24px] border border-[#44494c] bg-[#2c3135]"></div></div></div>
        <div class="flex h-[27px] items-center pl-[18px]"><span class="flex-1 italic tracking-[0.6px]">Print Sequence</span><svg class="mb-px mr-[8px] h-[14px] w-[14px] text-[#85888a]"><use href="#link"/></svg><svg class="mb-px mr-[11px] h-[14px] w-[14px]" viewBox="0 0 14 14"><path d="M3 4.500Q7 1 10.500 3.500 13.500 6.500 11.500 10 10 12.500 6.500 12.800" fill="none" stroke="#85888a" stroke-width="2"/><path d="M.5 1v6.500H7z" fill="#85888a"/></svg><div class="flex h-[24px] w-[120px] items-center justify-between border border-[#44494c] bg-[#2c3135] pl-[5px] pr-[9px]"><span class="tracking-[-0.15px]">Mixed</span><svg class="h-[8px] w-[10px]"><use href="#down"/></svg></div></div>
        <div class="flex h-[27px] items-center pl-[18px]"><span class="flex-1">Mold</span><div class="w-[120px]"><div class="h-[24px] w-[24px] border border-[#44494c] bg-[#2c3135]"></div></div></div>
        <div class="flex h-[27px] items-center pl-[18px]"><span class="flex-1">Surface Mode</span><div class="flex h-[24px] w-[120px] items-center justify-between border border-[#44494c] bg-[#2c3135] pl-[5px] pr-[9px]"><span class="tracking-[-0.3px]">Normal</span><svg class="h-[8px] w-[10px]"><use href="#down"/></svg></div></div>
        <div class="flex h-[27px] items-center pl-[18px]"><span class="flex-1 tracking-[-0.28px]">Spiralize Outer Contour</span><svg class="mb-px mr-[11px] h-[14px] w-[14px] text-[#85888a]"><use href="#link"/></svg><div class="w-[120px]"><div class="h-[24px] w-[24px] border border-[#44494c] bg-[#2c3135]"></div></div></div>
      </div>

      <div class="flex h-[27px] items-center pl-[12px] pr-[13px]"><svg class="h-[19px] w-[19px]" viewBox="0 0 19 19"><path d="M6.500 1.500h6V8l5 8.500h-15l4-8.500z" fill="none" stroke="currentColor"/><path d="M6 8.500h7l4.500 8H2z" fill="currentColor"/><circle cx="9" cy="5" r="1" fill="currentColor"/><circle cx="8" cy="11" r="1.300" fill="#272c30"/><circle cx="6" cy="14" r="1" fill="#272c30"/></svg><span class="ml-[12px]">Experimental</span><svg class="mb-px ml-auto h-[12px] w-[8px]"><use href="#left"/></svg></div>
      <div class="flex h-[27px] items-center pl-[12px] pr-[13px]"><svg class="h-[19px] w-[19px]" viewBox="0 0 19 19" fill="none" stroke="currentColor" stroke-width="1.300"><path d="M9.500 1 18 18H1z"/><path d="M9.500 6.500v6M9.500 14v1.700" stroke-width="1.600"/></svg><span class="ml-[12px] tracking-[0.65px]">BigRep Stuff</span><svg class="mb-px ml-auto h-[12px] w-[8px]"><use href="#left"/></svg></div>
    </div>
  </section>

  <section class="mt-[6px] flex-1 bg-[#272c30] px-[21px] pt-[17px]">
    <div class="h-[18px] pt-px text-[12px] font-bold tracking-[0.65px] text-[#dcdcdc]">Ready to Save to File</div>
    <div class="h-[5px] bg-[#515557]"></div>
    <div class="mt-[12px] flex h-[32px] items-center">
      <div class="flex-1"><div class="text-[16px] font-semibold leading-[18px]">05h 36min</div><div class="leading-[15px] tracking-[0.4px]">16.70m / ~ 138g</div></div>
      <div class="flex h-[32px] w-[32px] items-center justify-center border border-[#44494c]"><svg class="h-[18px] w-[18px]" viewBox="0 0 18 18"><path d="M5 5 15.500 16.500" stroke="#d0d0d0" stroke-width="2.600"/><path d="M2.500 16 12 6.500" stroke="#d0d0d0" stroke-width="2.400"/><path d="M.5 6 5.500 1l4-.5L7 3l1 2-3.500 3.500L3 7 2 8zM10 5.500Q9.500 2 13.500 1L12.500 4l2 1.500L17 4q.5 4-4 4.500z" fill="#d0d0d0"/></svg></div>
      <div class="ml-[10px] flex h-[32px] w-[109px] items-center justify-center bg-[#0ea9e3] tracking-[0.4px] text-white">Save to File</div>
    </div>
  </section>
</aside>
</div>

<script>
  // Build plate: 100 x 100 cells of 10 mm, seen in perspective with its horizon at y = -3505.
  const horizon = -3505, vx = 652, hx = 247000;
  let d = '';
  for (let i = 0; i <= 100; i++) {
    const x = 10.5 + 11.995 * i;
    const k = (x - vx) / (42 - horizon);
    d += `M${x.toFixed(2)} 42L${(vx + k * (1040 - horizon)).toFixed(2)} 1040`;
  }
  for (let j = 0; j < 90; j++) {
    const h = 4520 / (1 + 0.0034 * j);
    d += `M0 ${(horizon + h).toFixed(2)}L1400 ${(horizon + h - 1400 * h / hx).toFixed(2)}`;
  }
  const p = document.createElementNS('http://www.w3.org/2000/svg', 'path');
  p.setAttribute('d', d);
  document.getElementById('grid').appendChild(p);
</script>
</body>
</html>
